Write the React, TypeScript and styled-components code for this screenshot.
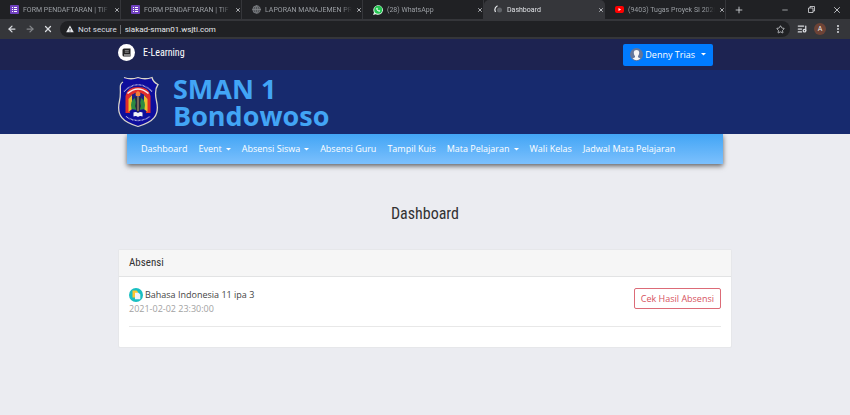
import React from "react";
import styled, { createGlobalStyle, css } from "styled-components";
import { ArrowLeft, ArrowRight, X, Plus, Star, ListMusic, MoreVertical, Minus, Globe } from "lucide-react";

const GlobalStyle = createGlobalStyle`
  * { box-sizing: border-box; }
  body { margin: 0; background: #ebecf1; font-family: "Open Sans", sans-serif; color: #333; }
  button { font-family: inherit; cursor: pointer; }
  h1, h2, h3, p { margin: 0; }
`;

const condensed = `"Roboto Condensed", "Liberation Sans Narrow", Roboto, sans-serif`;

const Page = styled.div`
  display: flex;
  flex-direction: column;
  min-height: 100vh;
`;

/* Browser window */
const Browser = styled.div`
  font-family: Roboto, sans-serif;
`;

const TabStrip = styled.div`
  display: flex;
  align-items: stretch;
  height: 19px;
  background: #202124;
`;

const TabItem = styled.div<{ $active?: boolean }>`
  display: flex;
  align-items: center;
  flex: 0 1 121px;
  min-width: 0;
  gap: 4px;
  padding: 0 0 0 10px;
  border-right: 1px solid #35363a;
  color: #9a9ea3;
  ${(p) =>
    p.$active &&
    css`
      background: #35363a;
      color: #dfe1e5;
      border-radius: 5px 5px 0 0;
    `}
`;

const TabTitle = styled.span`
  flex: 1;
  min-width: 0;
  overflow: hidden;
  white-space: nowrap;
  font-size: 7px;
  line-height: 10px;
  mask-image: linear-gradient(to right, #000 88%, transparent);
`;

const IconButton = styled.button`
  display: flex;
  align-items: center;
  justify-content: center;
  flex: none;
  padding: 0;
  border: 0;
  background: transparent;
  color: #dadce0;
`;

const NewTab = styled(IconButton)`
  width: 26px;
  margin-right: auto;
`;

const WindowButton = styled(IconButton)`
  width: 26px;
`;

const Toolbar = styled.div`
  display: flex;
  align-items: center;
  height: 20px;
  gap: 7px;
  padding: 0 7px;
  background: #35363a;
`;

const NavigationButtons = styled.div`
  display: flex;
  gap: 8px;
`;

const Address = styled.div`
  display: flex;
  align-items: center;
  flex: 1;
  height: 16px;
  gap: 4px;
  padding: 0 5px 0 6px;
  border-radius: 8px;
  background: #202124;
  color: #dadce0;
  font-size: 8px;
`;

const Insecure = styled.span`
  white-space: nowrap;
  padding-right: 3px;
  border-right: 1px solid #6b6d71;
  line-height: 9px;
`;

const AddressInput = styled.input`
  flex: 1;
  min-width: 0;
  padding: 0;
  border: 0;
  outline: 0;
  background: transparent;
  color: #e8eaed;
  font: 8px Roboto, sans-serif;
`;

const Profile = styled(IconButton)`
  width: 12px;
  height: 12px;
  border-radius: 50%;
  background: #6d4336;
  color: #eee;
  font-size: 7px;
`;

/* Site */
const Container = styled.div`
  width: 100%;
  max-width: 614px;
  margin: 0 auto;
`;

const TopBar = styled.header`
  background: #1d2351;
`;

const TopBarRow = styled(Container)`
  display: flex;
  align-items: center;
  justify-content: space-between;
  height: 31px;
  padding-right: 19px;
`;

const BrandLink = styled.a`
  display: flex;
  align-items: center;
  gap: 8px;
  margin-bottom: 4px;
  color: #fff;
  font: 400 10px ${condensed};
  text-decoration: none;
`;

const BookBadge = styled.span`
  display: flex;
  align-items: center;
  justify-content: center;
  width: 17px;
  height: 17px;
  border-radius: 50%;
  background: #fff;
`;

const UserButton = styled.button`
  display: flex;
  align-items: center;
  height: 22px;
  gap: 2px;
  padding: 0 7px;
  border: 0;
  border-radius: 2px;
  background: #007bff;
  color: #fff;
  font-size: 9px;
`;

const CaretIcon = styled.svg`
  flex: none;
  margin-left: 4px;
  fill: currentColor;
`;

const Masthead = styled.div`
  background: #172a6e;
`;

const MastheadRow = styled(Container)`
  display: flex;
  align-items: center;
  height: 64px;
  max-width: 616px;
  gap: 14px;
`;

const SchoolName = styled.h1`
  width: 180px;
  color: #42a5f5;
  font: 700 27px/27px "Open Sans", sans-serif;
`;

const NavBar = styled.nav`
  display: flex;
  align-items: center;
  height: 30px;
  gap: 11px;
  margin: 0 9px;
  padding: 0 14px;
  background: linear-gradient(#42a5f5, #7cc0fd);
  box-shadow: 0 2px 5px rgba(0, 0, 0, 0.6);
  clip-path: inset(0 -10px -10px -10px);
`;

const navText = css`
  display: flex;
  align-items: center;
  padding: 0;
  border: 0;
  background: transparent;
  color: #fff;
  font: 9px/12px "Open Sans", sans-serif;
  text-decoration: none;
  white-space: nowrap;
`;

const NavLink = styled.a`
  ${navText}
`;

const NavMenuButton = styled.button`
  ${navText}
`;

const PageTitle = styled.h2`
  margin: 39px 0 25px;
  text-align: center;
  font: 400 16px/21px ${condensed};
`;

const Card = styled.section`
  overflow: hidden;
  border: 1px solid #e6e7ea;
  border-radius: 2px;
  background: #fff;
`;

const CardTitle = styled.h3`
  padding: 0 10px;
  border-bottom: 1px solid #e2e3e4;
  background: #f6f6f6;
  font: 400 11px/26px ${condensed};
`;

const CardBody = styled.div`
  padding: 11px 10px 20px;
`;

const Attendance = styled.article`
  display: flex;
  align-items: flex-start;
  justify-content: space-between;
  padding-bottom: 10px;
  border-bottom: 1px solid #e8e8e8;
`;

const Lesson = styled.p`
  display: flex;
  align-items: center;
  gap: 2px;
  color: #444;
  font-size: 9px;
  line-height: 14px;
`;

const Time = styled.time`
  display: block;
  color: #a2a2a2;
  font-size: 9px;
  line-height: 14px;
`;

const ResultButton = styled.button`
  height: 21px;
  padding: 0 6px;
  border: 1px solid #dc6b77;
  border-radius: 2px;
  background: #fff;
  color: #d65260;
  font-size: 9px;
`;

const Caret = () => (
  <CaretIcon width="5" height="3" viewBox="0 0 5 3" aria-hidden="true">
    <path d="M0 0h5L2.500 2.600Z" />
  </CaretIcon>
);

const FormIcon = () => (
  <svg width="9" height="9" viewBox="0 0 9 9">
    <rect width="9" height="9" rx="1" fill="#7041c0" />
    <path d="M2 2.5h1M4 2.5h3M2 4.5h1M4 4.5h3M2 6.5h1M4 6.5h3" stroke="#fff" />
  </svg>
);

const SiteIcon = () => <Globe size={9} color="#85888c" fill="#505357" />;

const WhatsAppIcon = () => (
  <svg width="10" height="10" viewBox="0 0 10 10">
    <path d="M0 10 1 7.400A4.800 4.800 0 1 1 2.800 9.200Z" fill="#e9f9ee" />
    <circle cx="5.200" cy="4.800" r="4" fill="#25c552" />
    <path d="M3.300 3.100c-.4 1.800 1.900 4 3.600 3.500l.3-.9-1.200-.6-.5.500-1.200-1.200.5-.5-.5-1.100Z" fill="#fff" />
  </svg>
);

const LoadingIcon = () => (
  <svg width="9" height="9" viewBox="0 0 9 9" fill="none">
    <circle cx="5.500" cy="5" r="2.500" fill="#606368" />
    <path d="M3.500.8Q-.5 3 1.500 7" stroke="#e8eaed" strokeWidth="1.200" />
  </svg>
);

const YouTubeIcon = () => (
  <svg width="9" height="9" viewBox="0 0 9 9">
    <rect y="1" width="9" height="7" rx="2" fill="#f00" />
    <path d="M3.500 3v3l2.600-1.500Z" fill="#fff" />
  </svg>
);

const WarningIcon = () => (
  <svg width="8" height="8" viewBox="0 0 8 8">
    <path d="M4 .5 7.800 7.300H.2Z" fill="#e8eaed" />
    <path d="M4 3v2M4 5.600v.9" stroke="#202124" strokeWidth=".9" />
  </svg>
);

const RestoreIcon = () => (
  <svg width="7" height="7" viewBox="0 0 7 7" fill="none" stroke="#dadce0" strokeWidth=".8">
    <path d="M.5 2h4.500v4.500H.5ZM2 2V.5h4.500V5H5" />
  </svg>
);

const BookIcon = () => (
  <svg width="9" height="9" viewBox="0 0 9 9">
    <path d="M2 .5h6.500v8H2A1.500 1.500 0 0 1 .5 7V2A1.500 1.500 0 0 1 2 .5Z" fill="#222" />
    <path d="M2.800 2.700h4M2.800 4.200h4" stroke="#bbb" strokeWidth=".7" />
    <path d="M2 7h6" stroke="#fff" strokeWidth=".9" />
  </svg>
);

const AvatarIcon = () => (
  <svg width="13" height="13" viewBox="0 0 13 13">
    <circle cx="6.500" cy="6.500" r="6.500" fill="#65769a" />
    <path d="M3.800 4.500C3.600 1 9.400 1 9.200 4.500 9.100 6.500 8.600 7.300 8 8v1.300l2.500 1.300Q6.500 14 2.500 10.600L5 9.300V8C4.300 7.300 3.900 6.500 3.800 4.500Z" fill="#f5f5f5" />
  </svg>
);

const LessonIcon = () => (
  <svg width="14" height="14" viewBox="0 0 14 14">
    <circle cx="7" cy="7" r="7" fill="#19bfc2" />
    <path d="M3.500 2.500h4l1.500 1.500v5.500H3.500Z" fill="#fdc62f" />
    <path d="M6 4.700h3.500L11.300 6.500v4.800H6Z" fill="#eff2fa" />
  </svg>
);

const Crest = () => (
  <svg width="42" height="52" viewBox="0 0 42 52" role="img" aria-label="SMAN 1 Bondowoso">
    <path d="M7 1.500Q14 4 21 1.500 28 4 35 1.500 36 6 41 8.500 37 14 39.500 25C43 40 36 46 21 50.500 6 46-1 40 2.500 25 5 14 1 8.500 6 6 7 1.500Z" fill="#0e0e9c" stroke="#d9d5c9" strokeWidth="1.300" />
    <path d="M7 15.500Q21 2 35 15.500" fill="none" stroke="#c9c8e8" strokeWidth="1.300" strokeDasharray=".8 .6" />
    <path d="M8.500 37V20Q10 11 21 11T33.500 20V37H29V22Q27 17 21 17T13 22V37Z" fill="#e02c2b" />
    <path d="M10.500 17.500Q21 8.500 31.500 17.500" fill="none" stroke="#f7eceb" strokeWidth="1.600" />
    <path d="M12.500 36V22Q15 17 21 17T29.500 22V36L26 33H16Z" fill="#1b2185" />
    <path d="M11.500 36V23L15 19V33ZM30.500 36V23L27 19V33Z" fill="#eac12e" />
    <path d="M14.500 33Q12.500 25 18 22L20 34ZM27.500 33Q29.500 25 24 22L22 34Z" fill="#2c8b42" />
    <path d="M18 21h6l-1 5 1 4-2 6h-2l-2-6 1-4Z" fill="#272c3a" />
    <path d="M19 20Q17.500 17 21 15 24.500 17 23 20Z" fill="#f0803a" />
    <path d="M20.500 20h1v15h-1Z" fill="#c9a27b" />
    <path d="M16.500 36.500Q19 35.500 21 37 23 35.500 25.500 36.500V40.500Q23 39.500 21 41 19 39.500 16.500 40.500Z" fill="#f3f3f6" />
    <path d="M9 40.500Q21 48.500 33 40.500" fill="none" stroke="#c9c8e8" strokeWidth="1.300" strokeDasharray=".8 .6" />
  </svg>
);

const tabs = [
  { title: "FORM PENDAFTARAN | TIF", icon: <FormIcon /> },
  { title: "FORM PENDAFTARAN | TIF", icon: <FormIcon /> },
  { title: "LAPORAN MANAJEMEN PR", icon: <SiteIcon /> },
  { title: "(28) WhatsApp", icon: <WhatsAppIcon /> },
  { title: "Dashboard", icon: <LoadingIcon />, active: true },
  { title: "(9403) Tugas Proyek SI 2020", icon: <YouTubeIcon /> },
];

const navItems = [
  { label: "Dashboard" },
  { label: "Event", menu: true },
  { label: "Absensi Siswa", menu: true },
  { label: "Absensi Guru" },
  { label: "Tampil Kuis" },
  { label: "Mata Pelajaran", menu: true },
  { label: "Wali Kelas" },
  { label: "Jadwal Mata Pelajaran" },
];

export default function App() {
  return (
    <Page>
      <GlobalStyle />
      <Browser>
        <TabStrip>
          {tabs.map((tab, i) => (
            <TabItem key={i} $active={tab.active}>
              {tab.icon}
              <TabTitle>{tab.title}</TabTitle>
              <IconButton aria-label="Close tab"><X size={6} strokeWidth={3} /></IconButton>
            </TabItem>
          ))}
          <NewTab aria-label="New tab"><Plus size={10} /></NewTab>
          <WindowButton aria-label="Minimize"><Minus size={8} /></WindowButton>
          <WindowButton aria-label="Restore"><RestoreIcon /></WindowButton>
          <WindowButton aria-label="Close"><X size={10} /></WindowButton>
        </TabStrip>
        <Toolbar>
          <NavigationButtons>
            <IconButton aria-label="Back"><ArrowLeft size={10} strokeWidth={3} /></IconButton>
            <IconButton aria-label="Forward"><ArrowRight size={10} strokeWidth={3} color="#85878b" /></IconButton>
            <IconButton aria-label="Stop"><X size={10} strokeWidth={3} /></IconButton>
          </NavigationButtons>
          <Address>
            <WarningIcon />
            <Insecure>Not secure</Insecure>
            <AddressInput aria-label="Address" defaultValue="siakad-sman01.wsjti.com" />
            <IconButton aria-label="Bookmark"><Star size={9} /></IconButton>
          </Address>
          <IconButton aria-label="Media"><ListMusic size={10} strokeWidth={3} /></IconButton>
          <Profile aria-label="Profile">A</Profile>
          <IconButton aria-label="Menu"><MoreVertical size={10} strokeWidth={3} /></IconButton>
        </Toolbar>
      </Browser>

      <TopBar>
        <TopBarRow>
          <BrandLink href="#">
            <BookBadge><BookIcon /></BookBadge>
            E-Learning
          </BrandLink>
          <UserButton>
            <AvatarIcon />
            Denny Trias
            <Caret />
          </UserButton>
        </TopBarRow>
      </TopBar>
      <Masthead>
        <MastheadRow>
          <Crest />
          <SchoolName>SMAN 1 Bondowoso</SchoolName>
        </MastheadRow>
      </Masthead>
      <Container>
        <NavBar>
          {navItems.map((item) =>
            item.menu ? (
              <NavMenuButton key={item.label}>{item.label}<Caret /></NavMenuButton>
            ) : (
              <NavLink key={item.label} href="#">{item.label}</NavLink>
            )
          )}
        </NavBar>
        <main>
          <PageTitle>Dashboard</PageTitle>
          <Card>
            <CardTitle>Absensi</CardTitle>
            <CardBody>
              <Attendance>
                <div>
                  <Lesson><LessonIcon />Bahasa Indonesia 11 ipa 3</Lesson>
                  <Time dateTime="2021-02-02T23:30:00">2021-02-02 23:30:00</Time>
                </div>
                <ResultButton>Cek Hasil Absensi</ResultButton>
              </Attendance>
            </CardBody>
          </Card>
        </main>
      </Container>
    </Page>
  );
}
